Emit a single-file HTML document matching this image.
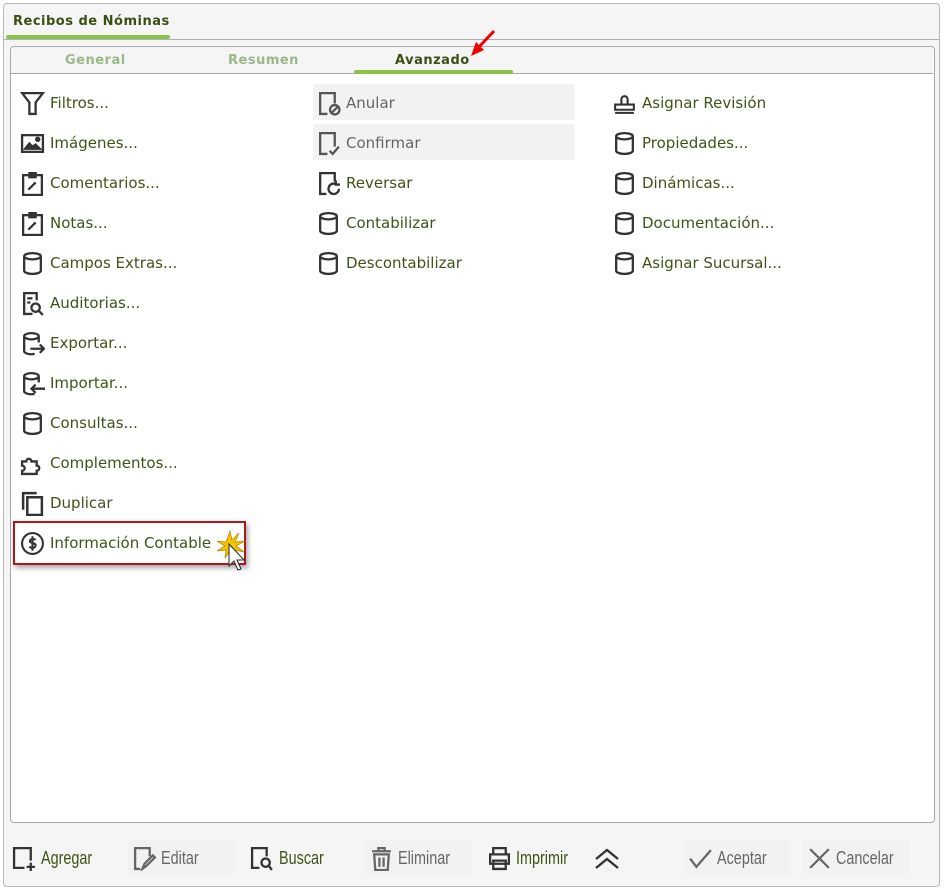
<!DOCTYPE html>
<html><head><meta charset="utf-8"><style>
body{margin:0;width:944px;height:890px;background:#fff;font-family:"DejaVu Sans","Liberation Sans",sans-serif;position:relative;overflow:hidden}
.outer{position:absolute;left:3px;top:3px;width:935px;height:882px;border:1px solid #b8b8b8;border-radius:4px;background:#f5f5f5}
.inner{position:absolute;left:10px;top:46px;width:923px;height:775px;border:1px solid #a8a8a8;border-radius:4px;background:#fff}
.tabbar{position:absolute;left:11px;top:47px;width:922px;height:26px;background:#f5f5f5;border-bottom:1px solid #a8a8a8;border-radius:4px 4px 0 0}
.t{position:absolute;font-weight:bold;font-size:13px;letter-spacing:.5px}
.it{position:absolute;height:36px;display:flex;align-items:center;font-size:15px;color:#3f5317;padding-top:2px;box-sizing:border-box}
.it svg{width:25px;height:25px;margin-right:5px;flex:none}
.g{background:#f2f2f2;color:#666}
.b{position:absolute;top:840px;height:36px;display:flex;align-items:center;font-size:18px;color:#3f5317;font-family:"Liberation Sans",sans-serif}
.b span{display:inline-block;transform:scaleX(.8);transform-origin:left;white-space:nowrap}
.b svg{width:25px;height:25px;margin-right:4px}
.bd{background:#f2f2f2;color:#666}
</style></head><body>
<div class="outer"></div>
<div class="t" style="left:13px;top:14px;color:#3a4f12">Recibos de Nóminas</div>
<div style="position:absolute;left:6px;top:35px;width:164px;height:4px;background:#8bc34a;border-radius:2px"></div>
<div style="position:absolute;left:4px;top:39px;width:935px;height:1px;background:#b0b0b0"></div>
<div class="inner"></div>
<div class="tabbar"></div>
<div class="t" style="left:65px;top:53px;color:#9bb889">General</div>
<div class="t" style="left:228px;top:53px;color:#9bb889">Resumen</div>
<div class="t" style="left:395px;top:53px;color:#3a4f12">Avanzado</div>
<div style="position:absolute;left:354px;top:70px;width:159px;height:4px;background:#8bc34a;border-radius:2px"></div>
<svg style="position:absolute;left:468px;top:28px" width="30" height="36"><path d="M26 3 L10 20" stroke="#e00" stroke-width="3"/><path d="M3 28 L8 14 L16 22Z" fill="#e00"/></svg>

<!-- col1 -->
<div class="it" style="left:20px;top:84px"><svg viewBox="0 0 24 24" fill="none" stroke="#333" stroke-width="2.2"><path d="M2 2h20l-7 9v11h-6V11z"/></svg>Filtros...</div>
<div class="it" style="left:20px;top:124px"><svg viewBox="0 0 24 24" fill="none" stroke="#333" stroke-width="2.2"><rect x="2" y="4" width="20" height="16"/><path d="M5 17l4-5 3 3 3-2 4 4z" fill="#333"/><circle cx="17" cy="8" r="1.5" fill="#333"/></svg>Imágenes...</div>
<div class="it" style="left:20px;top:164px"><svg viewBox="0 0 24 24" fill="none" stroke="#333" stroke-width="2.2"><rect x="3" y="4" width="18" height="19"/><path d="M9 2h6v4H9z" fill="#333"/><path d="M8 18l7-7"/></svg>Comentarios...</div>
<div class="it" style="left:20px;top:204px"><svg viewBox="0 0 24 24" fill="none" stroke="#333" stroke-width="2.2"><rect x="3" y="4" width="18" height="19"/><path d="M9 2h6v4H9z" fill="#333"/><path d="M8 18l7-7"/></svg>Notas...</div>
<div class="it" style="left:20px;top:244px"><svg viewBox="0 0 24 24" fill="none" stroke="#333" stroke-width="2.2"><path d="M4 5a8 3 0 0 1 16 0v14a8 3 0 0 1-16 0z M4 5a8 3 0 0 0 16 0"/></svg>Campos Extras...</div>
<div class="it" style="left:20px;top:284px"><svg viewBox="0 0 24 24" fill="none" stroke="#333" stroke-width="2.2"><path d="M12 22H4V2h12v7"/><path d="M7 7h5M7 11h3"/><circle cx="15" cy="16" r="4"/><path d="M18 19l4 4"/></svg>Auditorias...</div>
<div class="it" style="left:20px;top:324px"><svg viewBox="0 0 24 24" fill="none" stroke="#333" stroke-width="2.2"><path d="M18 11V5a7 3 0 0 0-14 0v14a7 3 0 0 0 10 3 M4 5a7 3 0 0 0 14 0"/><path d="M10 17h13M19 13l4 4-4 4"/></svg>Exportar...</div>
<div class="it" style="left:20px;top:364px"><svg viewBox="0 0 24 24" fill="none" stroke="#333" stroke-width="2.2"><path d="M18 11V5a7 3 0 0 0-14 0v14a7 3 0 0 0 10 3 M4 5a7 3 0 0 0 14 0"/><path d="M24 17H11M15 13l-4 4 4 4"/></svg>Importar...</div>
<div class="it" style="left:20px;top:404px"><svg viewBox="0 0 24 24" fill="none" stroke="#333" stroke-width="2.2"><path d="M4 5a8 3 0 0 1 16 0v14a8 3 0 0 1-16 0z M4 5a8 3 0 0 0 16 0"/></svg>Consultas...</div>
<div class="it" style="left:20px;top:444px"><svg viewBox="0 0 24 24" fill="none" stroke="#333" stroke-width="2.2"><path d="M2 10h4a2.5 2.5 0 1 1 5 0h5v4a2.5 2.5 0 1 1 0 5v3H2v-3a2.5 2.5 0 1 0 0-5z"/></svg>Complementos...</div>
<div class="it" style="left:20px;top:484px"><svg viewBox="0 0 24 24" fill="none" stroke="#333" stroke-width="2.4"><path d="M3 18V2h13"/><rect x="7" y="6" width="14" height="17"/></svg>Duplicar</div>
<div style="position:absolute;left:13px;top:521px;width:229px;height:40px;border:2px solid #b01818;box-shadow:2px 3px 5px rgba(0,0,0,.35)"></div>
<div class="it" style="left:20px;top:524px"><svg viewBox="0 0 24 24" fill="none" stroke="#333" stroke-width="2"><circle cx="12" cy="12" r="10"/><path d="M15 8.5c-1-1-5-1.5-5.5 1s6 1.5 5.5 4.5-4.5 2.5-6 1M12 5v14"/></svg>Información Contable</div>
<svg style="position:absolute;left:217px;top:530px" width="32" height="44"><path d="M13 1l2 9 7-7-4 9 10-1-9 5 8 6-10-2 1 8-5-7-5 7 1-8-9 1 8-5-8-5 9 1z" fill="#f5c400" stroke="#b88a00" stroke-width=".8"/><path d="M12 14v22l5-5 4 9 3-1-4-9h7z" fill="#fff" stroke="#222"/></svg>

<!-- col2 -->
<div class="it g" style="left:313px;top:84px;width:262px"><span style="width:3px"></span><svg viewBox="0 0 24 24" fill="none" stroke="#555" stroke-width="2.2"><path d="M11 22H4V2h14v10"/><circle cx="18" cy="18" r="4.5"/><path d="M15 21l6-6"/></svg>Anular</div>
<div class="it g" style="left:313px;top:124px;width:262px"><span style="width:3px"></span><svg viewBox="0 0 24 24" fill="none" stroke="#555" stroke-width="2.2"><path d="M11 22H4V2h14v13"/><path d="M13 19l3 3 6-7"/></svg>Confirmar</div>
<div class="it" style="left:316px;top:164px"><svg viewBox="0 0 24 24" fill="none" stroke="#333" stroke-width="2.2"><path d="M10 22H4V2h14v8"/><path d="M22 17a5 5 0 1 1-3-4.5M19 9v4h4"/></svg>Reversar</div>
<div class="it" style="left:316px;top:204px"><svg viewBox="0 0 24 24" fill="none" stroke="#333" stroke-width="2.2"><path d="M4 5a8 3 0 0 1 16 0v14a8 3 0 0 1-16 0z M4 5a8 3 0 0 0 16 0"/></svg>Contabilizar</div>
<div class="it" style="left:316px;top:244px"><svg viewBox="0 0 24 24" fill="none" stroke="#333" stroke-width="2.2"><path d="M4 5a8 3 0 0 1 16 0v14a8 3 0 0 1-16 0z M4 5a8 3 0 0 0 16 0"/></svg>Descontabilizar</div>

<!-- col3 -->
<div class="it" style="left:612px;top:84px"><svg viewBox="0 0 24 24" fill="none" stroke="#333" stroke-width="2"><path d="M9 13V8a3 3 0 1 1 6 0v5M3 13h18v5H3zM3 21h18"/></svg>Asignar Revisión</div>
<div class="it" style="left:612px;top:124px"><svg viewBox="0 0 24 24" fill="none" stroke="#333" stroke-width="2.2"><path d="M4 5a8 3 0 0 1 16 0v14a8 3 0 0 1-16 0z M4 5a8 3 0 0 0 16 0"/></svg>Propiedades...</div>
<div class="it" style="left:612px;top:164px"><svg viewBox="0 0 24 24" fill="none" stroke="#333" stroke-width="2.2"><path d="M4 5a8 3 0 0 1 16 0v14a8 3 0 0 1-16 0z M4 5a8 3 0 0 0 16 0"/></svg>Dinámicas...</div>
<div class="it" style="left:612px;top:204px"><svg viewBox="0 0 24 24" fill="none" stroke="#333" stroke-width="2.2"><path d="M4 5a8 3 0 0 1 16 0v14a8 3 0 0 1-16 0z M4 5a8 3 0 0 0 16 0"/></svg>Documentación...</div>
<div class="it" style="left:612px;top:244px"><svg viewBox="0 0 24 24" fill="none" stroke="#333" stroke-width="2.2"><path d="M4 5a8 3 0 0 1 16 0v14a8 3 0 0 1-16 0z M4 5a8 3 0 0 0 16 0"/></svg>Asignar Sucursal...</div>

<!-- bottom -->
<div class="b" style="left:12px"><svg viewBox="0 0 24 24" fill="none" stroke="#333" stroke-width="2.2"><path d="M12 21H2V2h16v12M14 20h8M18 16v8"/></svg><span>Agregar</span></div>
<div class="b bd" style="left:128px;width:106px;padding-left:4px;box-sizing:border-box"><svg viewBox="0 0 24 24" fill="none" stroke="#666" stroke-width="2.2"><path d="M8 22H3V2h14v8M10 22l2-5 8-8 2 2-8 8z"/></svg><span>Editar</span></div>
<div class="b" style="left:250px"><svg viewBox="0 0 24 24" fill="none" stroke="#333" stroke-width="2.2"><path d="M9 21H2V2h14v8"/><circle cx="15" cy="16" r="4"/><path d="M18 19l3 4"/></svg><span>Buscar</span></div>
<div class="b bd" style="left:365px;width:107px;padding-left:4px;box-sizing:border-box"><svg viewBox="0 0 24 24" fill="none" stroke="#666" stroke-width="2.2"><path d="M3 5h18M9 5V2h6v3M5 8h14l-1 15H6zM10 11v9M14 11v9"/></svg><span>Eliminar</span></div>
<div class="b" style="left:487px"><svg viewBox="0 0 24 24" fill="none" stroke="#333" stroke-width="2.2"><path d="M6 8V2h12v6M3 8h18v9H3zM6 14h12v8H6z"/></svg><span>Imprimir</span></div>
<svg style="position:absolute;left:594px;top:848px" width="26" height="22" fill="none" stroke="#333" stroke-width="2.4"><path d="M2 11l11-9 11 9M2 20l11-9 11 9"/></svg>
<div class="b bd" style="left:684px;width:106px;padding-left:4px;box-sizing:border-box"><svg viewBox="0 0 24 24" fill="none" stroke="#666" stroke-width="2.2"><path d="M2 12l6 8L22 4"/></svg><span>Aceptar</span></div>
<div class="b bd" style="left:803px;width:106px;padding-left:4px;box-sizing:border-box"><svg viewBox="0 0 24 24" fill="none" stroke="#666" stroke-width="2.2"><path d="M3 3l18 18M21 3L3 21"/></svg><span>Cancelar</span></div>
</body></html>
